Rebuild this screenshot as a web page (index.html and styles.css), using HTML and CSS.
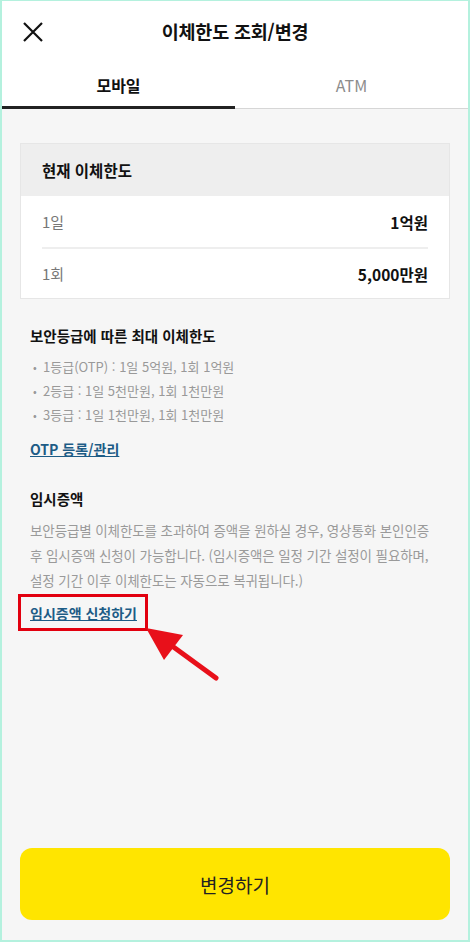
FILE: index.html
```html
<!DOCTYPE html>
<html lang="ko">
<head>
<meta charset="UTF-8">
<meta name="viewport" content="width=device-width, initial-scale=1.0">
<title>이체한도 조회/변경</title>
<link rel="stylesheet" href="styles.css">
</head>
<body>

<div class="screen">

  <!-- Header -->
  <div class="header">
    <span class="close">
      <svg width="22" height="22" viewBox="0 0 22 22"><path d="M2 2 L20 20 M20 2 L2 20" stroke="#111" stroke-width="2.2" fill="none"/></svg>
    </span>
    <h1>이체한도 조회/변경</h1>
  </div>

  <!-- Tabs -->
  <div class="tabs">
    <div class="tab active">모바일</div>
    <div class="tab">ATM</div>
  </div>

  <div class="content">

    <!-- Current limit card -->
    <div class="limit-card">
      <div class="limit-head">현재 이체한도</div>
      <div class="limit-body">
        <div class="limit-row">
          <span class="label">1일</span>
          <span class="value">1억원</span>
        </div>
        <div class="limit-row">
          <span class="label">1회</span>
          <span class="value">5,000만원</span>
        </div>
      </div>
    </div>

    <!-- Max limit by grade -->
    <div class="section">
      <h2>보안등급에 따른 최대 이체한도</h2>
      <ul class="grade-list">
        <li>1등급(OTP) : 1일 5억원, 1회 1억원</li>
        <li>2등급 : 1일 5천만원, 1회 1천만원</li>
        <li>3등급 : 1일 1천만원, 1회 1천만원</li>
      </ul>
      <a href="#" class="link">OTP 등록/관리</a>
    </div>

    <!-- Temporary increase -->
    <div class="section temp">
      <h2>임시증액</h2>
      <p class="desc">보안등급별 이체한도를 초과하여 증액을 원하실 경우, 영상통화 본인인증 후 임시증액 신청이 가능합니다. (임시증액은 일정 기간 설정이 필요하며, 설정 기간 이후 이체한도는 자동으로 복귀됩니다.)</p>
      <div class="highlight">
        <a href="#" class="link">임시증액 신청하기</a>
        <svg class="arrow" width="80" height="60" viewBox="0 0 80 60">
          <path d="M70 50 L22 15" stroke="#e8101a" stroke-width="5" stroke-linecap="round" fill="none"/>
          <polygon points="0,0 37,7 18,32" fill="#e8101a"/>
        </svg>
      </div>
    </div>

  </div>

  <div class="footer">
    <button type="button" class="btn-change">변경하기</button>
  </div>

</div>

</body>
</html>
```

FILE: styles.css
```css
* {
  box-sizing: border-box;
}

body {
  margin: 0;
  font-family: "Noto Sans CJK KR", "Noto Sans", sans-serif;
  color: #111;
}

.screen {
  width: 470px;
  height: 942px;
  display: flex;
  flex-direction: column;
  background-color: #f6f6f6;
  border: 2px solid #b4f1de;
  border-top-width: 1px;
}

/* Header */
.header {
  height: 63px;
  padding-bottom: 4px;
  display: flex;
  align-items: center;
  justify-content: center;
  position: relative;
  background-color: #fff;
}

.header h1 {
  margin: 0;
  font-size: 18.5px;
  font-weight: 700;
  letter-spacing: -0.2px;
}

.close {
  position: absolute;
  left: 20px;
  top: 20px;
  width: 22px;
  height: 22px;
}

/* Tabs */
.tabs {
  display: flex;
  height: 45px;
  background-color: #fff;
  border-bottom: 1px solid #d6d6d6;
}

.tab {
  flex: 1;
  display: flex;
  align-items: center;
  justify-content: center;
  font-size: 16px;
  color: #8c8c8c;
  padding-bottom: 3px;
}

.tab.active {
  color: #111;
  font-weight: 700;
  border-bottom: 3px solid #222;
  margin-bottom: -1px;
  padding-bottom: 1px;
}

/* Content */
.content {
  padding: 34px 18px 0 18px;
}

.limit-card {
  border: 1px solid #e6e6e6;
  background-color: #fff;
}

.limit-head {
  height: 52px;
  display: flex;
  align-items: center;
  padding-left: 21px;
  background-color: #eeeeee;
  font-size: 15.5px;
  font-weight: 700;
}

.limit-body {
  padding: 0 21px;
}

.limit-row {
  display: flex;
  justify-content: space-between;
  align-items: center;
  height: 51px;
  font-size: 15px;
}

.limit-row + .limit-row {
  border-top: 2px solid #eeeeee;
}

.limit-row .label {
  color: #777;
}

.limit-row .value {
  font-weight: 700;
  font-size: 15.5px;
}

/* Sections */
.section {
  padding: 0 10px;
  margin-top: 26px;
}

.section h2 {
  margin: 0 0 9px 0;
  font-size: 14.5px;
  font-weight: 700;
}

.grade-list {
  list-style: none;
  margin: 0 0 9px 0;
  padding: 0;
  color: #999;
  font-size: 13px;
  line-height: 23px;
}

.grade-list li::before {
  content: "•";
  display: inline-block;
  width: 10px;
  padding-left: 3px;
  font-size: 11px;
}

.link {
  color: #1d5c86;
  font-size: 14px;
  font-weight: 700;
  text-decoration: underline;
}

.temp {
  margin-top: 28px;
}

.desc {
  margin: 0 0 1px 0;
  color: #9a9a9a;
  font-size: 13.5px;
  line-height: 25px;
  letter-spacing: -0.1px;
}

/* Red box annotation */
.highlight {
  position: relative;
  display: inline-block;
  margin-left: -12px;
  padding: 3px 8px 4px 9px;
  border: 3px solid #e2000f;
}

.arrow {
  position: absolute;
  left: 125px;
  top: 31px;
}

/* Footer button */
.footer {
  margin-top: auto;
  padding: 0 18px 20px 18px;
}

.btn-change {
  width: 100%;
  height: 72px;
  border: none;
  border-radius: 12px;
  background-color: #ffe500;
  color: #222;
  font-family: "Noto Sans CJK KR", "Noto Sans", sans-serif;
  font-size: 19px;
  cursor: pointer;
}
```
